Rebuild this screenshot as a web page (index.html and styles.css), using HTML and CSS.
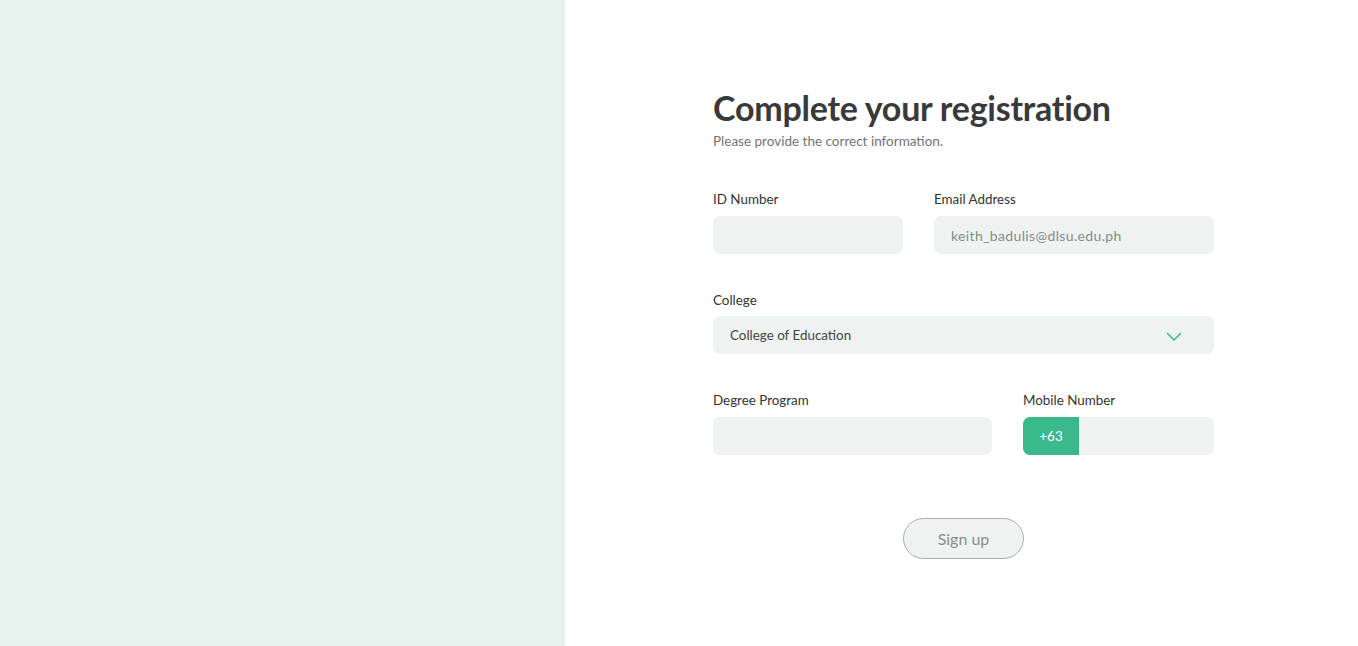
FILE: index.html
```html
<!DOCTYPE html>
<html>
<head>
<meta charset="utf-8">
<link rel="stylesheet" href="styles.css">
</head>
<body>
<div class="page">
  <aside class="side"></aside>
  <main class="main">
    <form class="form">
      <h1 class="title">Complete your registration</h1>
      <p class="subtitle">Please provide the correct information.</p>

      <div class="row row-1">
        <div class="field">
          <label class="label">ID Number</label>
          <div class="input"></div>
        </div>
        <div class="field">
          <label class="label">Email Address</label>
          <div class="input input-text muted">keith_badulis@dlsu.edu.ph</div>
        </div>
      </div>

      <div class="row row-single">
        <div class="field">
          <label class="label">College</label>
          <div class="input input-text select">
            <span>College of Education</span>
            <svg class="chevron" width="16" height="10" viewBox="0 0 16 10"><path d="M1.5 1.5 L8 8 L14.5 1.5" fill="none" stroke="#3dba8c" stroke-width="1.6" stroke-linecap="round" stroke-linejoin="round"/></svg>
          </div>
        </div>
      </div>

      <div class="row row-3">
        <div class="field">
          <label class="label">Degree Program</label>
          <div class="input"></div>
        </div>
        <div class="field">
          <label class="label">Mobile Number</label>
          <div class="input phone">
            <span class="prefix">+63</span>
          </div>
        </div>
      </div>

      <div class="actions">
        <button type="button" class="btn">Sign up</button>
      </div>
    </form>
  </main>
</div>
</body>
</html>
```

FILE: styles.css
```css
* { box-sizing: border-box; }
html, body { margin: 0; padding: 0; }
body {
  font-family: Lato, "Noto Sans", sans-serif;
  color: #333;
  background: #fff;
}
.page {
  display: flex;
  height: 646px;
}
.side {
  width: 565px;
  flex: none;
  background: #e7f1ee;
}
.main {
  flex: 1;
  padding-left: 148px;
  padding-top: 87px;
}
.form {
  width: 501px;
}
.title {
  margin: 0;
  font-size: 34px;
  font-weight: 700;
  color: #393939;
  letter-spacing: -0.25px;
  line-height: 42px;
}
.subtitle {
  margin: 3px 0 0;
  font-size: 13.5px;
  color: #737373;
  line-height: 18px;
}
.row {
  display: flex;
  gap: 31px;
}
.row-1 { margin-top: 40px; }
.row-1 .field:first-child { width: 190px; }
.row-1 .field:last-child { flex: 1; }
.row-single { margin-top: 37px; }
.row-single .field { flex: 1; }
.row-single .label { margin-bottom: 7px; }
.row-3 { margin-top: 37px; }
.row-3 .field:first-child { width: 279px; }
.row-3 .field:last-child { flex: 1; }
.field {
  display: flex;
  flex-direction: column;
}
.label {
  font-size: 13.4px;
  color: #333;
  line-height: 18px;
  margin-bottom: 8px;
}
.input {
  height: 38px;
  background: #eef3f1;
  border-radius: 7px;
}
.input-text {
  display: flex;
  align-items: center;
  padding: 0 17px;
  font-size: 13.4px;
  color: #444;
}
.muted { color: #8a8a8a; padding-left: 17px; font-size: 14px; letter-spacing: 0.35px; }
.select {
  justify-content: space-between;
  padding-right: 32px;
}
.chevron { display: block; margin-top: 3px; }
.phone {
  display: flex;
  overflow: hidden;
}
.prefix {
  width: 56px;
  background: #3aba8a;
  color: #fff;
  font-size: 13.5px;
  display: flex;
  align-items: center;
  justify-content: center;
}
.actions {
  display: flex;
  justify-content: center;
  margin-top: 63px;
}
.btn {
  width: 121px;
  height: 41px;
  border-radius: 21px;
  border: 1px solid #a9aeac;
  background: #eef3f1;
  color: #8c8c8c;
  font-family: Lato, "Noto Sans", sans-serif;
  font-size: 16px;
}
```
